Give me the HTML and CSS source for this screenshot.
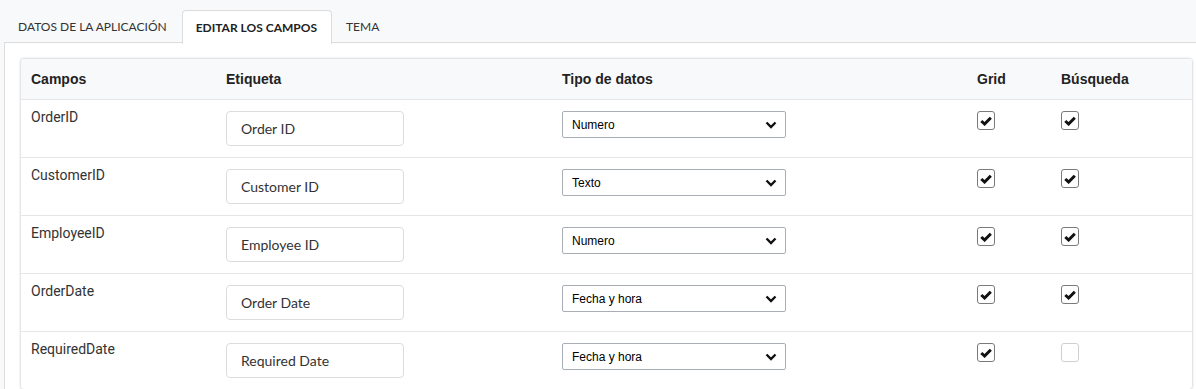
FILE: index.html
```html
<!DOCTYPE html>
<html lang="es">
<head>
  <meta charset="UTF-8" />
  <meta name="viewport" content="width=device-width, initial-scale=1.0">
  <title>Editar los campos</title>
  <link rel="stylesheet" href="styles.css">
</head>
<body>
  <div class="tabs">
    <a class="tab">DATOS DE LA APLICACIÓN</a>
    <a class="tab active">EDITAR LOS CAMPOS</a>
    <a class="tab">TEMA</a>
  </div>

  <div class="panel">
    <div class="card">
      <div class="row head">
        <div class="cell">Campos</div>
        <div class="cell">Etiqueta</div>
        <div class="cell">Tipo de datos</div>
        <div class="cell">Grid</div>
        <div class="cell">Búsqueda</div>
      </div>

      <div class="row">
        <div class="cell name">OrderID</div>
        <div class="cell"><input class="label-input" type="text" value="Order ID" /></div>
        <div class="cell"><div class="select"><span>Numero</span><svg width="12" height="8" viewBox="0 0 12 8"><path d="M1.5 1.5 L6 6 L10.5 1.5" fill="none" stroke="#111" stroke-width="2.4"/></svg></div></div>
        <div class="cell"><span class="check on"><svg width="12" height="10" viewBox="0 0 12 10"><path d="M1.3 5 L4.6 8 L10.8 1.8" fill="none" stroke="#111" stroke-width="3"/></svg></span></div>
        <div class="cell"><span class="check on"><svg width="12" height="10" viewBox="0 0 12 10"><path d="M1.3 5 L4.6 8 L10.8 1.8" fill="none" stroke="#111" stroke-width="3"/></svg></span></div>
      </div>

      <div class="row">
        <div class="cell name">CustomerID</div>
        <div class="cell"><input class="label-input" type="text" value="Customer ID" /></div>
        <div class="cell"><div class="select"><span>Texto</span><svg width="12" height="8" viewBox="0 0 12 8"><path d="M1.5 1.5 L6 6 L10.5 1.5" fill="none" stroke="#111" stroke-width="2.4"/></svg></div></div>
        <div class="cell"><span class="check on"><svg width="12" height="10" viewBox="0 0 12 10"><path d="M1.3 5 L4.6 8 L10.8 1.8" fill="none" stroke="#111" stroke-width="3"/></svg></span></div>
        <div class="cell"><span class="check on"><svg width="12" height="10" viewBox="0 0 12 10"><path d="M1.3 5 L4.6 8 L10.8 1.8" fill="none" stroke="#111" stroke-width="3"/></svg></span></div>
      </div>

      <div class="row">
        <div class="cell name">EmployeeID</div>
        <div class="cell"><input class="label-input" type="text" value="Employee ID" /></div>
        <div class="cell"><div class="select"><span>Numero</span><svg width="12" height="8" viewBox="0 0 12 8"><path d="M1.5 1.5 L6 6 L10.5 1.5" fill="none" stroke="#111" stroke-width="2.4"/></svg></div></div>
        <div class="cell"><span class="check on"><svg width="12" height="10" viewBox="0 0 12 10"><path d="M1.3 5 L4.6 8 L10.8 1.8" fill="none" stroke="#111" stroke-width="3"/></svg></span></div>
        <div class="cell"><span class="check on"><svg width="12" height="10" viewBox="0 0 12 10"><path d="M1.3 5 L4.6 8 L10.8 1.8" fill="none" stroke="#111" stroke-width="3"/></svg></span></div>
      </div>

      <div class="row">
        <div class="cell name">OrderDate</div>
        <div class="cell"><input class="label-input" type="text" value="Order Date" /></div>
        <div class="cell"><div class="select"><span>Fecha y hora</span><svg width="12" height="8" viewBox="0 0 12 8"><path d="M1.5 1.5 L6 6 L10.5 1.5" fill="none" stroke="#111" stroke-width="2.4"/></svg></div></div>
        <div class="cell"><span class="check on"><svg width="12" height="10" viewBox="0 0 12 10"><path d="M1.3 5 L4.6 8 L10.8 1.8" fill="none" stroke="#111" stroke-width="3"/></svg></span></div>
        <div class="cell"><span class="check on"><svg width="12" height="10" viewBox="0 0 12 10"><path d="M1.3 5 L4.6 8 L10.8 1.8" fill="none" stroke="#111" stroke-width="3"/></svg></span></div>
      </div>

      <div class="row">
        <div class="cell name">RequiredDate</div>
        <div class="cell"><input class="label-input" type="text" value="Required Date" /></div>
        <div class="cell"><div class="select"><span>Fecha y hora</span><svg width="12" height="8" viewBox="0 0 12 8"><path d="M1.5 1.5 L6 6 L10.5 1.5" fill="none" stroke="#111" stroke-width="2.4"/></svg></div></div>
        <div class="cell"><span class="check on"><svg width="12" height="10" viewBox="0 0 12 10"><path d="M1.3 5 L4.6 8 L10.8 1.8" fill="none" stroke="#111" stroke-width="3"/></svg></span></div>
        <div class="cell"><span class="check"></span></div>
      </div>
    </div>
  </div>
</body>
</html>
```

FILE: styles.css
```css
html, body {
  overflow: hidden;
}

body {
  background: #f8f9fa;
  color: #333;
  font-family: Lato, 'Liberation Sans', sans-serif;
  margin: 0;
  padding: 10px 0 0 4px;
  width: 1240px;
}

.tabs {
  display: flex;
  height: 32px;
}

.tab {
  display: flex;
  align-items: center;
  padding: 0 14px 0 13px;
  font-size: 12px;
  color: #333;
  border: 1px solid transparent;
  border-bottom: none;
  border-radius: 4px 4px 0 0;
  cursor: pointer;
}

.tab.active {
  background: #fff;
  border-color: #dcdcdc;
  font-weight: 700;
  color: #222;
  margin-bottom: -1px;
  height: 33px;
  position: relative;
  z-index: 1;
}

.panel {
  background: #fff;
  border-top: 1px solid #dcdcdc;
  border-left: 1px solid #dcdcdc;
  padding: 15px 0 0 15px;
  height: 400px;
}

.card {
  width: 1171px;
  border: 1px solid #e3e5e8;
  border-radius: 4px;
  box-shadow: 0 0 2px rgba(0, 0, 0, 0.15);
  overflow: hidden;
}

.row {
  display: grid;
  grid-template-columns: 194px 336px 415px 84px 1fr;
  height: 58px;
  border-top: 1px solid #e6e6e6;
  box-sizing: border-box;
}

.row.head {
  height: 40px;
  border-top: none;
  background: #f8f9fb;
  font-family: 'Liberation Sans', Arial, sans-serif;
  font-weight: 700;
  font-size: 14px;
  color: #222;
}

.cell {
  padding: 10px 11px 0;
}

.cell:first-child {
  padding-left: 10px;
}

.head .cell {
  padding: 0 11px;
  display: flex;
  align-items: center;
}

.head .cell:first-child {
  padding-left: 10px;
}

.name {
  font-family: Roboto, sans-serif;
  font-size: 14px;
  line-height: 18px;
  padding-top: 8px;
  color: #333;
}

.label-input {
  box-sizing: border-box;
  width: 178px;
  height: 35px;
  border: 1px solid #dcdcdc;
  border-radius: 4px;
  padding: 0 14px;
  font-family: Lato, sans-serif;
  font-size: 14px;
  color: #333;
  outline: none;
  margin-top: 1px;
}

.select {
  box-sizing: border-box;
  width: 224px;
  height: 27px;
  margin-top: 1px;
  border: 1px solid #a9aeb6;
  border-radius: 2px;
  display: flex;
  align-items: center;
  justify-content: space-between;
  padding: 0 8px 0 9px;
  font-family: 'Liberation Sans', Arial, sans-serif;
  font-size: 12px;
  color: #000;
}

.check {
  box-sizing: border-box;
  width: 18px;
  height: 19px;
  margin-top: 1px;
  border: 1px solid #cfcfcf;
  border-radius: 3px;
  display: flex;
  align-items: center;
  justify-content: center;
}

.check.on {
  border-color: #7a7a7a;
}
```
